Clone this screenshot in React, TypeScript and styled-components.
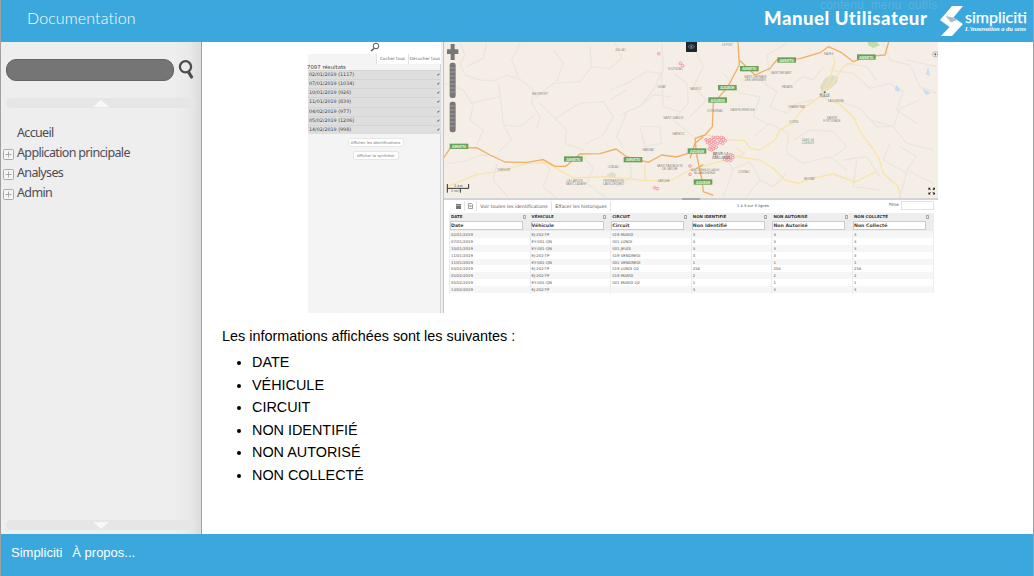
import React from 'react';
import styled, { createGlobalStyle } from 'styled-components';

const Global = createGlobalStyle`
  * { box-sizing: border-box; }
  body { margin: 0; background: #fff; }
`;

const Page = styled.div`
  width: 1034px;
  height: 576px;
  overflow: hidden;
  display: flex;
  flex-direction: column;
  border-left: 1px solid #a0a0a0;
  border-right: 1px solid #a0a0a0;
  font-family: 'Liberation Sans', Arial, sans-serif;
`;

const Header = styled.header`
  position: relative;
  height: 42px;
  flex: none;
  display: flex;
  align-items: flex-start;
  justify-content: space-between;
  background: #3aa8dc;
  color: #fff;
`;

const Title = styled.div`
  padding: 8px 0 0 26px;
  font: 300 16px/20px Lato, sans-serif;
  letter-spacing: 0.12px;
`;

const Brand = styled.div`
  display: flex;
  align-items: flex-start;
`;

const ManualName = styled.div`
  width: 166px;
  margin: 7px 10px 0 0;
  white-space: nowrap;
  font: 900 18.5px/22px Lato, sans-serif;
  letter-spacing: 0.55px;
`;

const SkipLinks = styled.div`
  position: absolute;
  left: 819px;
  top: -2px;
  font: 12px/14px 'Liberation Sans', sans-serif;
  letter-spacing: 0.2px;
  word-spacing: 3px;
  color: #5cb1da;
`;

const Body = styled.div`
  flex: none;
  height: 492px;
  display: flex;
`;

const Sidebar = styled.aside`
  width: 201px;
  flex: none;
  display: flex;
  flex-direction: column;
  padding: 17px 0 4px 5px;
  border-right: 1px solid #a2a2a2;
  background: linear-gradient(90deg, #eee 0, #eee 172px, #e9e9e9 188px, #dcdcdc 200px);
`;

const SearchRow = styled.div`
  display: flex;
  align-items: flex-start;
  gap: 4px;
  height: 39px;
`;

const SearchField = styled.div`
  width: 168px;
  height: 22px;
  border: 1px solid #646464;
  border-radius: 10px;
  background: #757575;
`;

const ScrollBar = styled.div`
  width: 190px;
  height: 10px;
  flex: none;
  display: flex;
  justify-content: center;
  align-items: center;
  border-radius: 5px;
  background: #e6e6e6;
`;

const Menu = styled.nav`
  flex: 1;
  padding-top: 15px;
  margin-left: -4px;
`;

const MenuItem = styled.div`
  display: flex;
  align-items: center;
  height: 20px;
  font: 12.5px/20px 'Noto Sans', sans-serif;
  letter-spacing: -0.65px;
  color: #4c4c55;
`;

const ExpanderSlot = styled.span`
  display: flex;
  width: 15px;
  padding: 3px 0 0 1px;
`;

const Main = styled.main`
  flex: 1;
  color: #000;
`;

const Capture = styled.figure`
  display: flex;
  width: 630px;
  height: 271px;
  margin: 0 0 0 106px;
  font-family: 'DejaVu Sans', sans-serif;
  color: #444;
`;

const ResultsPanel = styled.section`
  width: 136px;
  flex: none;
  background: #f4f4f4;
  border-right: 1px solid #c4c4c4;
  box-shadow: inset -2px 0 #f0f0f0, inset -3px 0 #d4d4d4;
`;

const PanelTop = styled.div`
  height: 12px;
  width: 133px;
  display: flex;
  justify-content: center;
  background: #fff;
`;

const PanelActions = styled.div`
  display: flex;
  justify-content: flex-end;
  width: 133px;
  height: 10px;
  font-size: 4.2px;
  line-height: 10px;
  color: #666;
`;

const PanelAction = styled.span`
  width: ${(p: { $w: number }) => p.$w}px;
  text-align: center;
  white-space: nowrap;
  background: #fff;
  border-left: 1px solid #e2e2e2;
`;

const ResultCount = styled.div`
  height: 6px;
  margin-left: -1px;
  font-size: 5.4px;
  line-height: 7px;
`;

const DayRow = styled.div`
  display: flex;
  justify-content: space-between;
  width: 133px;
  height: 9.15px;
  padding: 0 1px;
  font-size: 4.8px;
  line-height: 8.6px;
  background: #dedede;
  border-top: 0.5px solid #d4d4d4;
`;

const Tick = styled.span`
  font-size: 4px;
`;

const PanelButton = styled.div`
  width: ${(p: { $w: number }) => p.$w}px;
  height: 9px;
  margin: 4px auto 0;
  text-align: center;
  white-space: nowrap;
  font-size: 3.8px;
  line-height: 7px;
  color: #777;
  background: #fff;
  border: 1px solid #e6e6e6;
  border-radius: 2px;
`;

const RightPane = styled.section`
  width: 494px;
  display: flex;
  flex-direction: column;
`;

const MapView = styled.svg`
  display: block;
  flex: none;
  width: 494px;
  height: 156px;
  background: #f5eee6;
`;

const Splitter = styled.div`
  height: 2px;
  margin-bottom: 1px;
  background: linear-gradient(90deg, #d3d3d3 0 238px, #a9a9a9 238px 256px, #d3d3d3 256px);
`;

const Toolbar = styled.div`
  display: flex;
  align-items: center;
  height: 10px;
  margin-left: 8px;
  font-size: 4.65px;
  color: #555;
  white-space: nowrap;
`;

const Tool = styled.span`
  display: flex;
  justify-content: center;
  align-items: center;
  width: ${(p: { $w: number }) => p.$w}px;
  height: 10px;
  border-right: 1px solid #e4e4e4;
`;

const Range = styled.span`
  width: 32px;
  margin: -1px 0 0 126px;
  font-size: 3.7px;
`;

const Filter = styled.span`
  display: flex;
  gap: 2px;
  margin-left: 120px;
  font-size: 4px;
`;

const FilterBox = styled.span`
  width: 33px;
  height: 9px;
  margin-top: -1px;
  background: #fff;
  border: 1px solid #e2e2e2;
`;

const Table = styled.div`
  width: 485px;
  margin: 2px 0 0 5px;
`;

const Row = styled.div`
  display: grid;
  grid-template-columns: repeat(6, 80.6px);
  height: 6.9px;
  font-size: 3.8px;
  line-height: 7.4px;
  color: #555;
  background: ${(p: { $alt?: boolean }) => (p.$alt ? '#f6f6f6' : '#fff')};
  border-right: 1px solid #eee;
`;

const Cell = styled.span`
  padding-left: 1px;
  white-space: nowrap;
  border-left: 0.5px solid #ececec;
`;

const HeadRow = styled(Row)`
  height: 7px;
  font-size: 4px;
  font-weight: bold;
  color: #333;
  background: #eee;
`;

const HeadCell = styled(Cell)`
  display: flex;
  justify-content: space-between;
  padding-right: 4px;
`;

const SortMark = styled.span`
  width: 3px;
  height: 4px;
  margin-top: 1.5px;
  border: 0.5px solid #aaa;
`;

const FilterRow = styled(Row)`
  height: 11px;
  padding-top: 1px;
  background: #ececec;
`;

const ColumnFilter = styled.span`
  width: 73px;
  height: 9px;
  margin-left: 1px;
  font-size: 4.7px;
  font-weight: bold;
  line-height: 8px;
  color: #444;
  background: #fff;
  border: 0.6px solid #ccc;
`;

const Intro = styled.p`
  margin: 12px 0 4px 20px;
  font-size: 14.4px;
  line-height: 22px;
`;

const Fields = styled.ul`
  margin: 0;
  padding-left: 50px;
  font-size: 14.4px;
  line-height: 22.6px;
`;

const Footer = styled.footer`
  display: flex;
  gap: 10px;
  flex: 1;
  padding: 11px 0 0 10px;
  font-size: 13px;
  line-height: 16px;
  color: #fff;
  background: #3aa8dc;
`;

const days = ['02/01/2019 (1117)', '07/01/2019 (1034)', '10/01/2019 (926)', '11/01/2019 (839)', '04/02/2019 (977)', '05/02/2019 (1206)', '14/02/2019 (998)'];
const columns = ['Date', 'Véhicule', 'Circuit', 'Non Identifié', 'Non Autorisé', 'Non Collecté'];
const rows = [
  ['02/01/2019', 'EJ-202-TP', 'S19 MARDI', '3'],
  ['07/01/2019', 'EY-001-QN', 'S01 LUNDI', '3'],
  ['10/01/2019', 'EY-001-QN', 'S01 JEUDI', '3'],
  ['11/01/2019', 'EJ-202-TP', 'S19 VENDREDI', '3'],
  ['11/01/2019', 'EY-001-QN', 'S01 VENDREDI', '1'],
  ['04/02/2019', 'EJ-202-TP', 'S19 LUNDI Q2', '258'],
  ['05/02/2019', 'EJ-202-TP', 'S19 MARDI', '2'],
  ['05/02/2019', 'EY-001-QN', 'S01 MARDI Q2', '1'],
  ['14/02/2019', 'EJ-202-TP', '', '3'],
];

type Label = [string, number, number, number];

const westPlaces: Label[] = [
  ['JUILLAC', 525, 34, 32], ['VOUTEZAC', 683, 89, 46], ['OBJAT', 652, 143, 26], ['HAUTEFORT', 276, 165, 48],
  ['SAINT-VIANCE', 670, 236, 60], ['VARETZ', 697, 284, 36], ['MANSAC', 608, 334, 36], ['THENON', 172, 393, 38],
  ['CUBLAC', 503, 383, 34], ['LE LARDIN', 380, 426, 48], ['SAINT-LAZARE', 377, 436, 62], ['TERRASSON', 489, 426, 62],
  ['LAVILLEDIEU', 489, 436, 62], ['SAINT-PANTALEON', 650, 380, 78], ['DE LARCHE', 667, 390, 46], ['LARCHE', 653, 426, 36],
];
const eastPlaces: Label[] = [
  ['LE PONT', 96, 17, 32], ['NAVES', 402, 45, 28], ['SAINT-GERMAIN', 162, 115, 68], ['LES-VERGNES', 165, 124, 63],
  ['SAINT-MEXANT', 243, 103, 62], ['FAVARS', 276, 145, 32], ['SADROC', 0, 151, 34], ['LAGUENNE', 414, 186, 48],
  ['CHAMEYRAT', 294, 203, 52], ['DONZENAC', 52, 215, 48], ['SAINTE-FEREOLE', 121, 213, 73], ['CORNIL', 297, 248, 30],
  ['SAINTE', 410, 236, 32], ['FORTUNADE', 400, 246, 52], ['COSNAC', 144, 399, 35], ['BEYNAT', 342, 420, 33],
];

// Motorway shields: number, centre x, centre y.
const signs: [string, number, number][] = [
  ['A89/E70', 57, 319], ['A89/E70', 400, 357], ['A89/E70', 579, 359],
  ['A89/E70', 1040, 60], ['A89/E70', 1279, 51], ['A89/E70', 928, 86],
  ['A20/E09', 862, 143], ['A20/E09', 833, 180], ['A20/E09', 771, 333], ['A20/E09', 789, 426],
];

// Runs of red location markers: first x, y, marker count.
const clusters = [
  [656, 41, 1], [721, 70, 1], [728, 77, 1], [644, 443, 1], [652, 446, 1], [750, 378, 1], [750, 403, 1],
  [824, 292, 6], [802, 299, 5], [842, 299, 4], [806, 307, 6], [846, 307, 2], [815, 319, 4], [812, 327, 3],
  [876, 344, 2], [864, 350, 4], [858, 358, 4], [828, 346, 2],
];

const PlaceNames = ({ items }: { items: Label[] }) => (
  <g fill="#8d8a84" fontSize="10" fontFamily="Liberation Sans, sans-serif">
    {items.map(([t, x, y, w], i) => (
      <text key={i} x={x} y={y} textLength={w} lengthAdjust="spacingAndGlyphs">{t}</text>
    ))}
  </g>
);

const RoadMap = () => (
  <MapView viewBox="12 6 1482 468" preserveAspectRatio="none">
    <g fill="none" stroke="#eae5de" strokeWidth="4" strokeLinejoin="round">
      <path d="M60 10 75 45 60 70 75 105 120 120 165 122 200 105 240 118 280 150 275 190 300 230 290 265" />
      <path d="M80 80 130 55 140 10M240 10 215 60 235 110M175 130 185 200 190 255 240 260 285 225" />
      <path d="M12 130 70 150 100 195 90 240 130 270 110 315M90 190 180 170M190 255 215 300 175 335" />
      <path d="M285 175 340 130 420 125 455 80 450 20M340 30 370 70 350 125M455 80 510 85 545 55 525 10" />
      <path d="M300 190 345 235 380 270 375 310 430 330M345 235 420 190 490 185 520 230 490 285 430 315" />
      <path d="M510 150 560 130 620 95 665 100 670 200 720 215M510 180 560 150M540 225 605 195 640 165 690 170" />
      <path d="M665 10 670 90 640 150 600 200 560 215 530 290 550 320M600 260 660 260 665 310 615 320 600 260" />
      <path d="M700 100 740 130 745 190 700 240 760 290M300 350 330 390 310 440 350 474M170 370 160 420 205 474" />
      <path d="M430 350 460 385 440 430 500 474M570 370 575 410 530 440M20 370 70 365 120 345 180 350" />
      <path d="M760 20 790 80 760 140 800 180 750 230M850 100 900 160 960 170 940 230 990 255" />
      <path d="M900 120 960 120 1010 155 990 200 1040 220 1070 190 1120 180M990 100 980 45 1040 10" />
      <path d="M940 290 990 250 1045 280 1040 340 1090 370 1170 350 1220 390M1060 300 1110 270 1180 275 1220 320 1180 350" />
      <path d="M840 330 880 390 850 470M870 390 930 365 960 420 920 470M960 420 1000 440 1040 400" />
      <path d="M1150 80 1120 120 1090 110 1060 130M1170 90 1240 100 1290 145 1350 130 1390 155 1370 210 1430 250" />
      <path d="M1200 185 1260 205 1310 260 1360 260 1400 310 1480 330M1220 70 1280 80 1310 120M1330 10 1350 60 1410 75 1440 140 1490 160" />
      <path d="M1290 240 1360 260 1380 205 1440 180M1210 360 1280 350 1320 410M1350 310 1330 360 1400 400 1380 470" />
      <path d="M1380 320 1430 350 1400 390 1480 430M1250 360 1240 440 1320 450M1400 60 1490 80" />
    </g>
    <g fill="#dfddc8">
      <path d="M1155 115 1178 105 1195 112 1190 130 1165 150 1145 158 1140 140Z" />
      <path d="M500 404 516 396 530 404 525 414 503 414Z" />
      <path d="M1283 6H1310L1320 16 1300 24 1285 16Z" fill="#c6dca6" />
    </g>
    <g fill="#c3dcf5"><path d="M1369 135 1380 148 1375 156 1364 149ZM1464 82 1470 108 1458 103ZM1446 145 1472 160 1458 165Z" /></g>
    <g fill="none" stroke="#f8e3a8" strokeWidth="4" strokeLinejoin="round">
      <path d="M20 440 110 404 190 392 260 370 320 368 375 400 400 414 500 410 610 421 690 423 750 390 820 370 890 350" />
      <path d="M615 368V420M795 283 850 298 915 302 930 325 960 330 1005 300 1020 270 1055 250 1090 205 1140 170 1168 120 1185 65 1180 50M1140 170 1180 125 1210 80 1250 60" />
      <path d="M1140 170 1195 190 1240 230 1260 275 1290 315 1315 350 1330 400 1375 440 1380 474M890 350 960 360 1000 385 1035 420 1075 430 1115 415 1180 402 1245 426 1310 394" />
      <path d="M887 325 915 340 890 350" strokeWidth="3" />
    </g>
    <g fill="none" stroke="#eeb066" strokeWidth="4" strokeLinejoin="round">
      <path d="M12 352 30 325 110 323 150 345 195 366 260 367 310 359 345 379 378 379 420 342 480 341 528 327 560 350 625 367 665 345 710 351 750 338" />
      <path d="M894 6 898 75 862 143 820 190 817 260 795 285 765 295 770 345 786 420 790 455 820 466M770 385 790 374M898 60 945 105 990 85 1010 60 1080 56 1140 38 1165 20 1205 38 1240 65 1280 50 1335 45 1346 6M750 355 765 310 790 290" />
    </g>
    <PlaceNames items={westPlaces} />
    <g transform="translate(750 0)"><PlaceNames items={eastPlaces} /></g>
    {signs.map(([name, x, y], i) => (
      <g key={i}>
        <rect x={x - 28} y={y - 8} width="56" height="16" fill="#67a259" />
        <text x={x - 22} y={y + 5} fontSize="12" fontWeight="bold" fill="#d8ebd0" textLength="44">{name}</text>
      </g>
    ))}
    <g fill="#fcdfe2" stroke="#f08e97" strokeWidth="2.5">
      {clusters.flatMap(([x, y, n], i) =>
        Array.from({ length: n }, (_, k) => <circle key={`${i}-${k}`} cx={x + k * 6 - (n > 1 ? 4 : 0)} cy={y + (k % 2) * 3} r="4" />),
      )}
    </g>
    <g fill="#66645f" fontSize="12">
      <text x="818" y="346" textLength="48" lengthAdjust="spacingAndGlyphs">BRIVE-LA</text>
      <text x="816" y="357" textLength="54" lengthAdjust="spacingAndGlyphs">GAILLARDE</text>
      <text x="1138" y="171" fontSize="13" textLength="32">TULLE</text>
      <circle cx="1154" cy="157" r="3" />
      <text x="752" y="394" fontSize="10" fill="#777" textLength="86" lengthAdjust="spacingAndGlyphs">SAINT-CERNIN-DE-LARCHE</text>
      <text x="762" y="403" fontSize="10" fill="#777" textLength="64" lengthAdjust="spacingAndGlyphs">BLANCHERIE</text>
      <text x="1085" y="303" fontSize="10" fill="#5f9b80" textLength="38" lengthAdjust="spacingAndGlyphs">GARE DE</text>
      <text x="1085" y="312" fontSize="10" fill="#5f9b80" textLength="38" lengthAdjust="spacingAndGlyphs">CORREZE</text>
    </g>
    <g fill="#77777a">
      <path d="M32 12H44V28H55V42H44V60H32V42H21V28H32Z" />
      <rect x="29" y="68" width="18" height="106" rx="7" />
      <rect x="29" y="185" width="18" height="92" rx="7" />
    </g>
    <path d="M30 84H46M30 96H46M30 108H46M30 120H46M30 132H46M30 144H46M30 156H46M30 198H46M30 210H46M30 222H46M30 234H46M30 246H46M30 258H46" stroke="#b5b3b1" strokeWidth="2" />
    <path d="M22 432V458M22 445H86M86 432V445M61 445V458" fill="none" stroke="#333" strokeWidth="3" />
    <g fill="#333" fontSize="10"><text x="43" y="442">5 km</text><text x="33" y="457">2 mi</text></g>
    <rect x="738" y="5" width="33" height="31" rx="2" fill="#1d2630" />
    <path d="M744 20q10-11 20 0q-10 11-20 0Z" fill="none" stroke="#8593a0" strokeWidth="2" />
    <circle cx="754" cy="20" r="3" fill="#8593a0" />
    <rect x="1479" y="36" width="14" height="14" rx="3" fill="#fff" stroke="#999" strokeWidth="2" />
    <path d="M1482 43H1490M1486 39V47" stroke="#444" strokeWidth="2" />
    <g transform="translate(1475 453.5)" fill="#2e2523">
      {[0, 90, 180, 270].map((a) => (
        <path key={a} transform={`rotate(${a})`} d="M10 -10V-3L7.5 -5.5 4.5 -2.5 2.5 -4.5 5.5 -7.5 3 -10Z" />
      ))}
    </g>
  </MapView>
);

const Expander = () => (
  <svg width="11" height="11" viewBox="0 0 11 11" fill="none" stroke="#a9a9a9">
    <rect x=".5" y=".5" width="10" height="10" rx="1" fill="#f5f5f5" />
    <path d="M2.5 5.5H8.5M5.5 2.5V8.5" />
  </svg>
);

const Logo = () => (
  <svg width="93" height="42" viewBox="940 0 93 42">
    <path d="M952 6H963L953.5 17.5 963 24 952 36H941L949.5 27 940 20Z" fill="#fff" />
    <path d="M945.5 16 953.5 17.5 957 20 951 22.5Z" fill="#aebccb" />
    <text x="965" y="23" fontSize="15.5" fontFamily="Lato, sans-serif" fill="#fff" stroke="#fff" strokeWidth=".25" textLength="62" lengthAdjust="spacingAndGlyphs">simpliciti</text>
    <text x="965" y="31" fontSize="6.4" fontWeight="bold" fontStyle="italic" fontFamily="Liberation Serif, serif" fill="#fff" textLength="61">L'innovation a du sens</text>
  </svg>
);

export default function App() {
  return (
    <Page>
      <Global />
      <Header>
        <Title>Documentation</Title>
        <SkipLinks>contenu menu outils</SkipLinks>
        <Brand>
          <ManualName>Manuel Utilisateur</ManualName>
          <Logo />
        </Brand>
      </Header>
      <Body>
        <Sidebar>
          <SearchRow>
            <SearchField />
            <svg width="17" height="22" viewBox="0 0 17 22" fill="none" stroke="#4c4c4c">
              <circle cx="7.5" cy="7.8" r="5.6" strokeWidth="2.3" />
              <path d="M10.5 13 13.5 18" strokeWidth="3.2" strokeLinecap="round" />
            </svg>
          </SearchRow>
          <ScrollBar><svg width="16" height="7"><path d="M0 7 8 0 16 7Z" fill="#f8f8f8" /></svg></ScrollBar>
          <Menu>
            {['Accueil', 'Application principale', 'Analyses', 'Admin'].map((name, i) => (
              <MenuItem key={name}>
                <ExpanderSlot>{i > 0 && <Expander />}</ExpanderSlot>
                {name}
              </MenuItem>
            ))}
          </Menu>
          <ScrollBar><svg width="16" height="7"><path d="M0 0 8 7 16 0Z" fill="#f8f8f8" /></svg></ScrollBar>
        </Sidebar>
        <Main>
          <Capture>
            <ResultsPanel>
              <PanelTop>
                <svg width="10" height="10" viewBox="0 0 10 10" fill="#fff" stroke="#555"><circle cx="6" cy="4" r="2.8" /><path d="M4 6.5 1 9" strokeWidth="1.5" /></svg>
              </PanelTop>
              <PanelActions>
                <PanelAction $w={32}>Cocher tous</PanelAction>
                <PanelAction $w={33}>Décocher tous</PanelAction>
              </PanelActions>
              <ResultCount>7097 résultats</ResultCount>
              {days.map((d) => (
                <DayRow key={d}><span>{d}</span><Tick>✔</Tick></DayRow>
              ))}
              <PanelButton $w={56}>Afficher les identifications</PanelButton>
              <PanelButton $w={46}>Afficher la synthèse</PanelButton>
            </ResultsPanel>
            <RightPane>
              <RoadMap />
              <Splitter />
              <Toolbar>
                <Tool $w={13}><svg width="5" height="5"><path d="M0 0H5V5H0Z" fill="#777" /><path d="M0 1.5H5" stroke="#ddd" strokeWidth=".5" /></svg></Tool>
                <Tool $w={12}><svg width="5" height="6" fill="none" stroke="#888" strokeWidth=".8"><path d="M.5 .5H3.5L4.5 1.5V5.5H.5ZM1.5 2 3.5 4M3.5 2 1.5 4" /></svg></Tool>
                <Tool $w={75}>Voir toutes les identifications</Tool>
                <Tool $w={59}>Effacer les historiques</Tool>
                <Range>1 à 9 sur 9 lignes</Range>
                <Filter>Filtre <FilterBox /></Filter>
              </Toolbar>
              <Table>
                <HeadRow>
                  {columns.map((c) => <HeadCell key={c}>{c.toUpperCase()}<SortMark /></HeadCell>)}
                </HeadRow>
                <FilterRow>
                  {columns.map((c) => <ColumnFilter key={c}>{c}</ColumnFilter>)}
                </FilterRow>
                {rows.map(([date, vehicle, circuit, count], i) => (
                  <Row key={i} $alt={i % 2 === 0}>
                    {[date, vehicle, circuit, count, count, count].map((v, k) => <Cell key={k}>{v}</Cell>)}
                  </Row>
                ))}
              </Table>
            </RightPane>
          </Capture>
          <Intro>Les informations affichées sont les suivantes :</Intro>
          <Fields>
            {columns.map((c) => <li key={c}>{c.toUpperCase()}</li>)}
          </Fields>
        </Main>
      </Body>
      <Footer><span>Simpliciti</span><span>À propos...</span></Footer>
    </Page>
  );
}
